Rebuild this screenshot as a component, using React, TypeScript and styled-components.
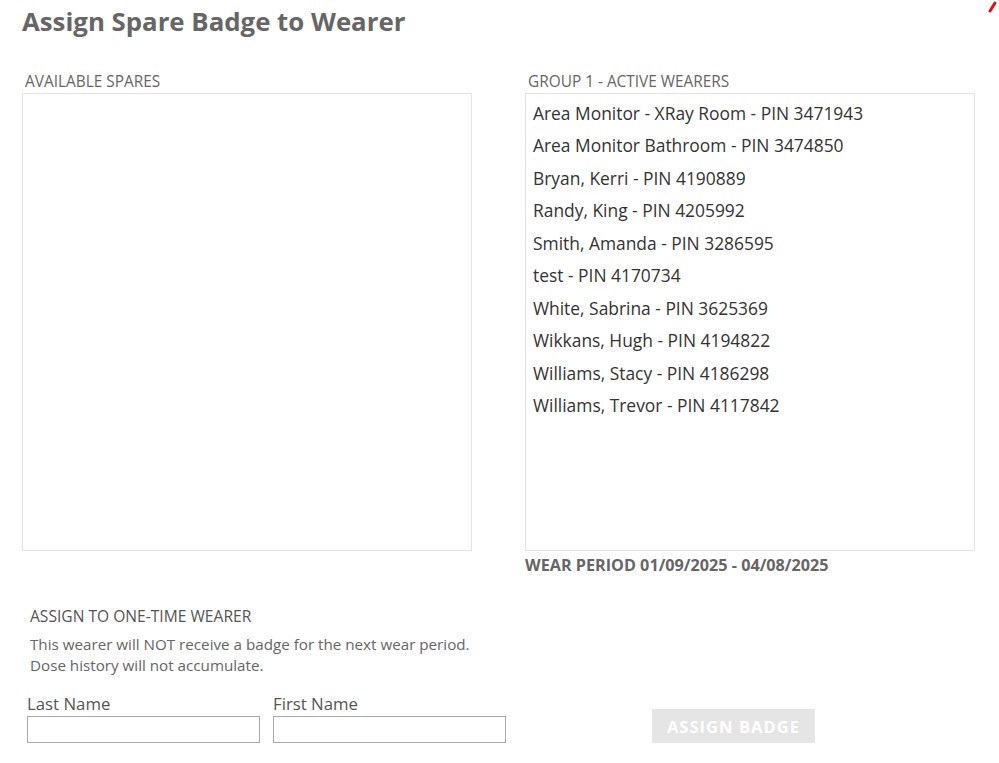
import styled, { createGlobalStyle } from "styled-components"

const Global = createGlobalStyle`
  body {
    margin: 0;
    background: #fff;
    font-family: "Open Sans", "Noto Sans", sans-serif;
    color: #333;
  }
`

const Page = styled.div`
  position: relative;
  width: 999px;
  height: 763px;
  padding: 4px 0 0 22px;
  box-sizing: border-box;
  overflow: hidden;
`

const Title = styled.h1`
  margin: 0;
  font-size: 25.8px;
  line-height: 34px;
  font-weight: 700;
  color: #666;
`

const Columns = styled.div`
  display: grid;
  grid-template-columns: 450px 450px;
  column-gap: 53px;
  margin-top: 34px;
`

const Column = styled.div`
  display: flex;
  flex-direction: column;
`

const Caption = styled.div`
  font-size: 15.4px;
  line-height: 20px;
  padding: 0 0 1px 3px;
  color: #666;
  text-transform: uppercase;
`

const ListBox = styled.div`
  height: 458px;
  box-sizing: border-box;
  border: 1px solid #e3e3e3;
  padding: 3px 0 0 7px;
`

const Item = styled.div`
  font-size: 17.4px;
  line-height: 32.45px;
  color: #333;
`

const Period = styled.div`
  margin-top: 3px;
  font-size: 16.2px;
  line-height: 22px;
  font-weight: 700;
  color: #666;
`

const Bottom = styled.div`
  display: flex;
  align-items: flex-end;
  margin-top: 30px;
`

const OneTime = styled.div`
  display: flex;
  flex-direction: column;
  width: 490px;
`

const SubHead = styled.div`
  padding-left: 8px;
  font-size: 15.6px;
  line-height: 20px;
  color: #555;
`

const Note = styled.p`
  margin: 8px 0 0;
  padding-left: 8px;
  font-size: 15.2px;
  line-height: 21px;
  color: #666;
`

const Fields = styled.div`
  display: flex;
  gap: 13px;
  margin-top: 16px;
  padding-left: 5px;
`

const Field = styled.label`
  display: flex;
  flex-direction: column;
  font-size: 16.8px;
  line-height: 24px;
  color: #555;
`

const Input = styled.input`
  width: 233px;
  height: 27px;
  box-sizing: border-box;
  border: 1px solid #aaa;
  margin: 0;
  padding: 0 4px;
  font: inherit;
`

const Button = styled.button`
  margin: 0 0 0 140px;
  width: 163px;
  height: 34px;
  border: none;
  background: #e5e5e5;
  color: #fff;
  font-family: inherit;
  font-size: 16.6px;
  font-weight: 700;
  letter-spacing: 1px;
  text-transform: uppercase;
`

const Corner = styled.svg`
  position: absolute;
  top: 0;
  right: 0;
`

const wearers = [
  "Area Monitor - XRay Room - PIN 3471943",
  "Area Monitor Bathroom - PIN 3474850",
  "Bryan, Kerri - PIN 4190889",
  "Randy, King - PIN 4205992",
  "Smith, Amanda - PIN 3286595",
  "test - PIN 4170734",
  "White, Sabrina - PIN 3625369",
  "Wikkans, Hugh - PIN 4194822",
  "Williams, Stacy - PIN 4186298",
  "Williams, Trevor - PIN 4117842",
]

export default function App() {
  return (
    <>
      <Global />
      <Page>
        <Corner width="14" height="14" viewBox="0 0 14 14">
          <path d="M5 11 L10 3" stroke="#e01010" strokeWidth="3" strokeLinecap="round" fill="none" />
        </Corner>
        <Title>Assign Spare Badge to Wearer</Title>
        <Columns>
          <Column>
            <Caption>Available Spares</Caption>
            <ListBox />
          </Column>
          <Column>
            <Caption>Group 1 - Active Wearers</Caption>
            <ListBox>
              {wearers.map((w) => (
                <Item key={w}>{w}</Item>
              ))}
            </ListBox>
            <Period>WEAR PERIOD 01/09/2025 - 04/08/2025</Period>
          </Column>
        </Columns>
        <Bottom>
          <OneTime>
            <SubHead>ASSIGN TO ONE-TIME WEARER</SubHead>
            <Note>
              This wearer will NOT receive a badge for the next wear period.
              <br />
              Dose history will not accumulate.
            </Note>
            <Fields>
              <Field>
                Last Name
                <Input type="text" />
              </Field>
              <Field>
                First Name
                <Input type="text" />
              </Field>
            </Fields>
          </OneTime>
          <Button disabled>Assign Badge</Button>
        </Bottom>
      </Page>
    </>
  )
}
